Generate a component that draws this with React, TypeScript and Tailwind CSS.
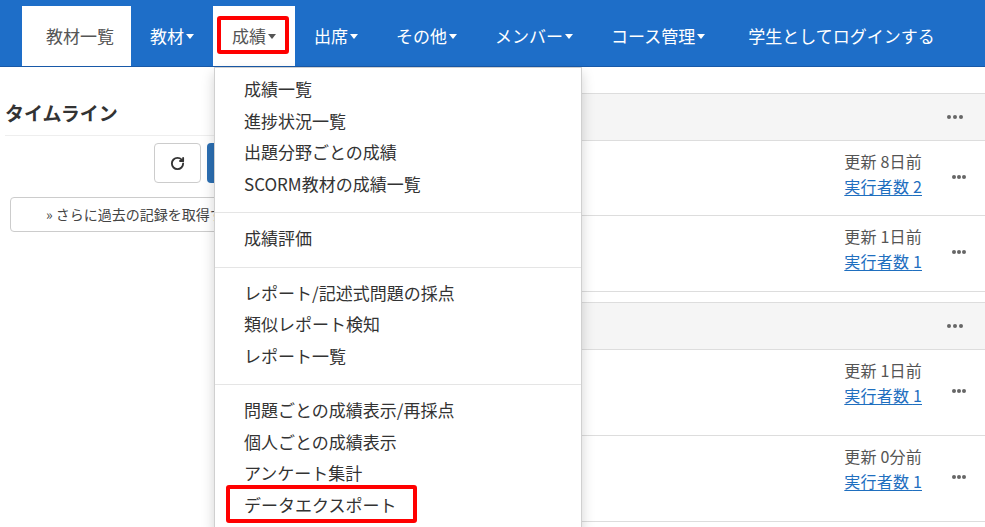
import { RotateCw } from "lucide-react";

const Caret = ({ light }: { light?: boolean }) => (
  <span
    className={
      "ml-[2px] inline-block w-0 h-0 border-x-[4px] border-x-transparent border-t-[5px] " +
      (light ? "border-t-white" : "border-t-[#555]")
    }
  />
);

const Dots = ({ size }: { size: "lg" | "sm" }) => (
  <div className={"flex items-center " + (size === "lg" ? "gap-[2px]" : "gap-[1px]")}>
    {[0, 1, 2].map((i) => (
      <span key={i} className="rounded-full bg-[#666] w-[4px] h-[4px]" />
    ))}
  </div>
);

const Row = ({ days, count, h }: { days: string; count: number; h: string }) => (
  <div className={"flex justify-end border-t border-[#ddd] bg-white " + h}>
    <div className="pt-[8px] text-[16px] leading-[25px] tracking-[0.2px]">
      <div className="text-[#555]">更新 {days}</div>
      <a className="text-[#1f6fbf] underline underline-offset-2">実行者数 {count}</a>
    </div>
    <div className="self-center ml-[30px] mr-[19px] -mt-[3px]">
      <Dots size="sm" />
    </div>
  </div>
);

const Panel = ({ rows, tall }: { rows: { days: string; count: number }[]; tall?: boolean }) => (
  <div className="border-l border-y border-[#ddd] mb-[10px]">
    <div className="h-[46px] bg-[#f5f5f5] flex items-center justify-end pr-[22px]">
      <Dots size="lg" />
    </div>
    {rows.map((r, i) => (
      <Row
        key={i}
        days={r.days}
        count={r.count}
        h={tall ? "h-[86px]" : i === 0 ? "h-[75px]" : "h-[76px]"}
      />
    ))}
  </div>
);

const menu: (string | null)[] = [
  "成績一覧",
  "進捗状況一覧",
  "出題分野ごとの成績",
  "SCORM教材の成績一覧",
  null,
  "成績評価",
  null,
  "レポート/記述式問題の採点",
  "類似レポート検知",
  "レポート一覧",
  null,
  "問題ごとの成績表示/再採点",
  "個人ごとの成績表示",
  "アンケート集計",
  "データエクスポート",
];

export default function App() {
  return (
    <div className="relative w-[985px] h-[527px] overflow-hidden bg-white text-[#333] font-['Noto_Sans_CJK_JP','Noto_Sans',sans-serif]">
      {/* Navbar */}
      <nav className="h-[67px] bg-[#1e6ec8] border-b border-[#1859a8] flex items-end pl-[22px] text-[17px] leading-[24px]">
        <div className="h-[60px] bg-white text-[#555] flex items-center pl-[24px] pr-[17px]">教材一覧</div>
        <div className="h-[60px] text-white flex items-center px-[19px]">
          教材<Caret light />
        </div>
        <div className="relative h-[60px] bg-white text-[#555] flex items-center px-[19px]">
          成績<Caret />
          <span className="absolute left-[4px] top-[10px] w-[72px] h-[38px] border-[4px] border-[#ff0000] rounded-[3px]" />
        </div>
        <div className="h-[60px] text-white flex items-center px-[19px]">
          出席<Caret light />
        </div>
        <div className="h-[60px] text-white flex items-center px-[19px]">
          その他<Caret light />
        </div>
        <div className="h-[60px] text-white flex items-center px-[19px]">
          メンバー<Caret light />
        </div>
        <div className="h-[60px] text-white flex items-center px-[19px]">
          コース管理<Caret light />
        </div>
        <div className="h-[60px] text-white flex items-center px-[19px] ml-[5px]">学生としてログインする</div>
      </nav>

      <div className="flex">
        {/* Timeline column */}
        <aside className="w-[300px] shrink-0 pl-[5px] pr-[10px]">
          <h3 className="mt-[33px] text-[19px] leading-[26px] font-bold text-[#333]">タイムライン</h3>
          <div className="mt-[9px] border-t border-[#eee]" />
          <div className="mt-[7px] flex gap-[6px] pl-[149px]">
            <button className="w-[47px] h-[40px] border border-[#ccc] rounded-[4px] bg-white flex items-center justify-center">
              <RotateCw className="w-[15px] h-[15px] text-[#333]" strokeWidth={3} />
            </button>
            <button className="w-[46px] h-[40px] rounded-[4px] bg-[#2c6fb3]" />
          </div>
          <button className="mt-[14px] ml-[5px] w-[280px] h-[35px] border border-[#ccc] rounded-[4px] bg-white text-left pl-[35px] text-[14px] text-[#444]">
            » さらに過去の記録を取得する
          </button>
        </aside>

        {/* Activity panels */}
        <main className="flex-1 pt-[26px]">
          <Panel
            rows={[
              { days: "8日前", count: 2 },
              { days: "1日前", count: 1 },
            ]}
          />
          <Panel
            tall
            rows={[
              { days: "1日前", count: 1 },
              { days: "0分前", count: 1 },
            ]}
          />
        </main>
      </div>

      {/* 成績 dropdown */}
      <div className="absolute left-[214px] top-[67px] w-[368px] bg-white border border-[#d0d0d0] shadow-[0_6px_12px_rgba(0,0,0,0.18)] pt-[5px] pb-[10px] text-[17px] text-[#333]">
        {menu.map((m, i) =>
          m === null ? (
            <div key={i} className="mt-[13px] mb-[9px] h-px bg-[#e5e5e5]" />
          ) : (
            <div key={i} className="relative h-[31.5px] flex items-center pl-[29px]">
              {m}
              {m === "データエクスポート" && (
                <span className="absolute left-[11px] -top-[4px] w-[191px] h-[38px] border-[4px] border-[#ff0000] rounded-[3px]" />
              )}
            </div>
          )
        )}
      </div>
    </div>
  );
}
